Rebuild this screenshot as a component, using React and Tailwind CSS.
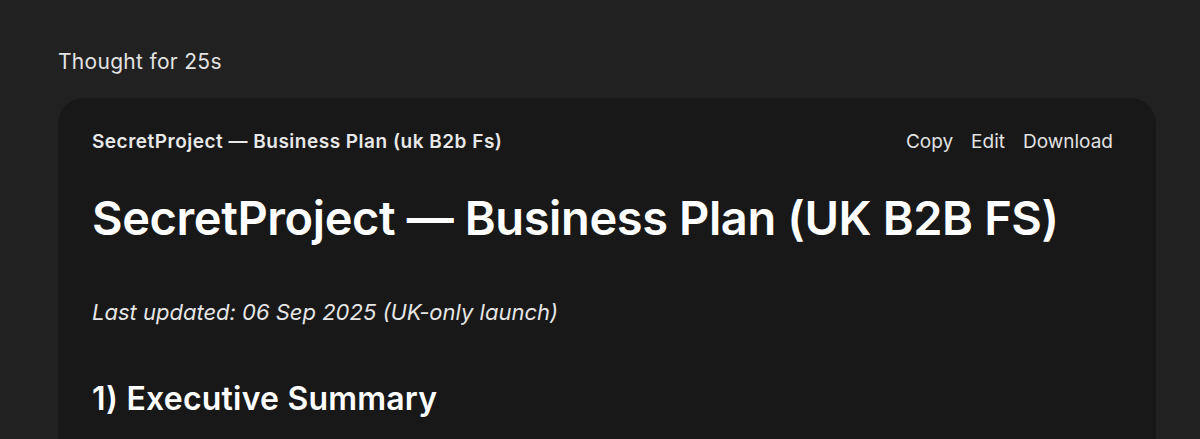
export default function App() {
  return (
    <div
      className="min-h-[439px] bg-[#212121] pl-[58px] pr-[44px] pt-[48px] text-[#ececec]"
      style={{ fontFamily: 'Inter, "Noto Sans", sans-serif' }}
    >
      <p className="text-[21px] leading-[28px] tracking-[0.3px] text-[#e3e3e3]">Thought for 25s</p>

      <div className="mt-[22px] h-[360px] rounded-t-[26px] bg-[#181818] pl-[34px] pr-[43px] pt-[30px]">
        {/* Header */}
        <div className="flex h-[28px] items-center justify-between">
          <span className="text-[19px] font-semibold tracking-[0.5px] text-[#e8e8e8]">
            SecretProject — Business Plan (uk B2b Fs)
          </span>
          <div className="flex items-center gap-[18px] text-[19px] text-[#e2e2e2]">
            <button>Copy</button>
            <button>Edit</button>
            <button>Download</button>
          </div>
        </div>

        <h1 className="mt-[34px] text-[47px] font-semibold leading-[56px] tracking-[-0.4px] text-white">
          SecretProject — Business Plan (UK B2B FS)
        </h1>

        <p className="mt-[50px] text-[22px] italic leading-[32px] text-[#e6e6e6]">
          Last updated: 06 Sep 2025 (UK-only launch)
        </p>

        <h2 className="mt-[51px] text-[32px] font-semibold leading-[40px] tracking-[0.2px] text-white">
          1) Executive Summary
        </h2>
      </div>
    </div>
  );
}
